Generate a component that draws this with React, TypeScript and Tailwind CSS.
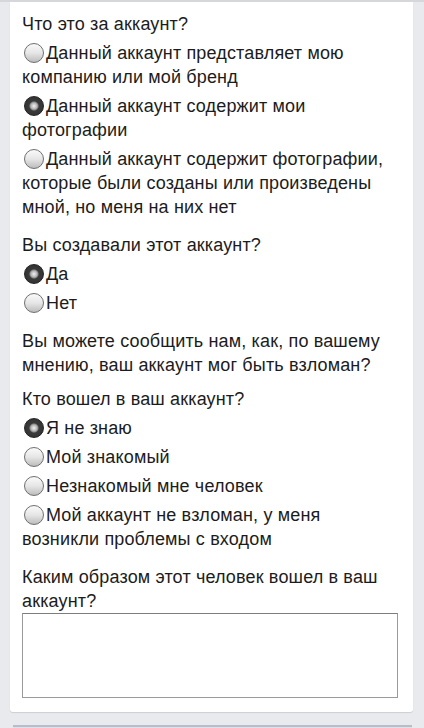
import React from 'react'

interface Option {
  label: string
  checked?: boolean
}

function Radio({ checked }: { checked?: boolean }) {
  if (checked) {
    return (
      <span className="inline-block w-[20px] h-[20px] rounded-full border border-[#222] bg-[radial-gradient(circle,#f2f2f2_0,#b5b5b5_3px,#8a8a8a_4px,#3a3a3a_5px,#2e2e2e_100%)] align-[-4px] ml-[2px] mr-[2px]" />
    )
  }
  return (
    <span className="inline-block w-[20px] h-[20px] rounded-full border border-[#6f6f6f] bg-linear-to-b from-[#fafafa] via-[#e6e6e6] to-[#bdbdbd] align-[-4px] ml-[2px] mr-[2px]" />
  )
}

function Question({ title, options, className = 'mt-[14px]' }: { title: string; options?: Option[]; className?: string }) {
  return (
    <div className={className}>
      <p>{title}</p>
      {options?.map(option => (
        <p key={option.label} className="mt-[5px]">
          <Radio checked={option.checked} />
          {option.label}
        </p>
      ))}
    </div>
  )
}

export default function App() {
  return (
    <div
      className="min-h-screen bg-[#e9eaed] border-t-2 border-[#d6d7da] text-[#1c1c1c] text-[18px] leading-[24px] tracking-[0.15px]"
      style={{ fontFamily: '"Liberation Sans", Arial, sans-serif' }}
    >
      <div className="ml-[10px] mr-[11px] bg-white rounded-b-[3px] shadow-[0_1px_1px_rgba(0,0,0,0.12)] pl-[12px] pr-[15px] pt-[10px] pb-[14px]">
        <Question
          className=""
          title="Что это за аккаунт?"
          options={[
            { label: 'Данный аккаунт представляет мою компанию или мой бренд' },
            { label: 'Данный аккаунт содержит мои фотографии', checked: true },
            { label: 'Данный аккаунт содержит фотографии, которые были созданы или произведены мной, но меня на них нет' },
          ]}
        />
        <Question
          title="Вы создавали этот аккаунт?"
          options={[{ label: 'Да', checked: true }, { label: 'Нет' }]}
        />
        <Question title="Вы можете сообщить нам, как, по вашему мнению, ваш аккаунт мог быть взломан?" />
        <Question
          className="mt-[10px]"
          title="Кто вошел в ваш аккаунт?"
          options={[
            { label: 'Я не знаю', checked: true },
            { label: 'Мой знакомый' },
            { label: 'Незнакомый мне человек' },
            { label: 'Мой аккаунт не взломан, у меня возникли проблемы с входом' },
          ]}
        />
        <div className="mt-[14px]">
          <p>Каким образом этот человек вошел в ваш аккаунт?</p>
          <textarea className="block w-full h-[85px] border border-[#9a9a9a] border-t-[#7d7d7d] bg-white resize-none outline-none" />
        </div>
      </div>
      <div className="mt-[13px] ml-[13px] mr-[12px] h-[4px] border-t-2 border-[#b7bdc9] bg-[#dfe1e6]" />
    </div>
  )
}
